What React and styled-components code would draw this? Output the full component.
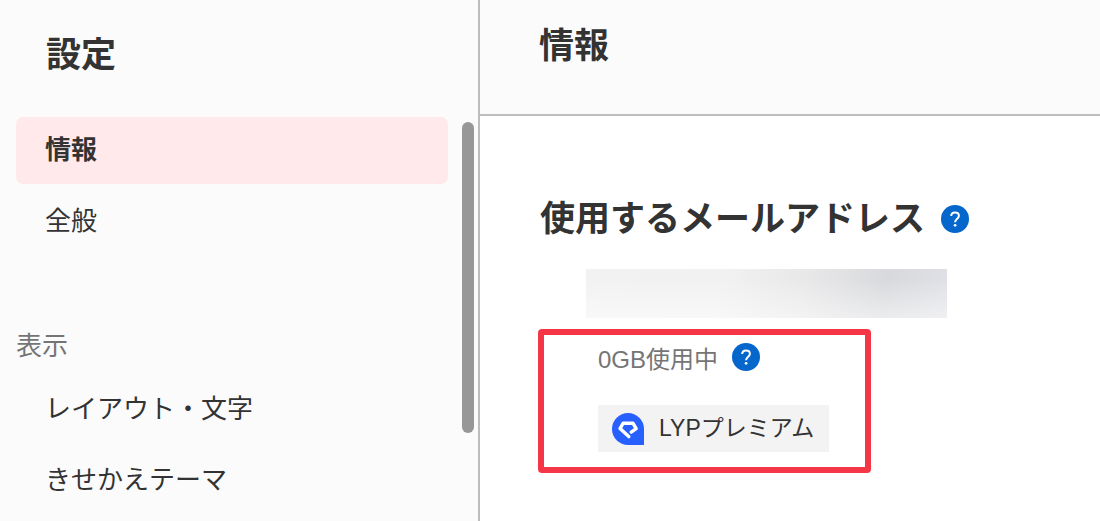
import styled, {createGlobalStyle} from "styled-components";

const GlobalStyle = createGlobalStyle`
  * {
    box-sizing: border-box;
  }

  body {
    margin: 0;
    background: #fff;
    color: #333;
    font-family: "Liberation Sans", "Noto Sans CJK JP", sans-serif;
  }
`

const Page = styled.div`
  display: flex;
  min-height: 100vh;
`

const Sidebar = styled.aside`
  flex: 0 0 480px;
  background: #fbfbfb;
  border-right: 2px solid #bdbdbd;
`

const SidebarTitle = styled.h1`
  margin: 0;
  padding: 33px 46px 40px;
  font-size: 35px;
  line-height: 44px;
`

const ScrollArea = styled.div`
  display: flex;
  gap: 14px;
  padding: 0 4px 0 16px;
`

const Menu = styled.nav`
  flex: 1;
  min-width: 0;
`

const MenuList = styled.ul`
  display: flex;
  flex-direction: column;
  gap: 4px;
  margin: 0;
  padding: 0;
  list-style: none;
`

const MenuLink = styled.a`
  display: block;
  padding: 0 29px;
  border-radius: 7px;
  background: ${props => props.$active ? '#ffe9eb' : 'transparent'};
  color: #333;
  font-size: 26px;
  font-weight: ${props => props.$active ? 'bold' : 'normal'};
  line-height: 67px;
  text-decoration: none;
`

const GroupTitle = styled.h2`
  margin: 72px 0 11px;
  color: #757575;
  font-size: 26px;
  font-weight: normal;
  line-height: 38px;
`

const ScrollThumb = styled.div`
  flex: 0 0 12px;
  height: 311px;
  margin-top: 5px;
  border-radius: 6px;
  background: #979797;
`

const Main = styled.main`
  flex: 1;
  min-width: 0;
`

const MainHeader = styled.header`
  padding: 24px 59px 46px;
  background: #fbfbfb;
  border-bottom: 2px solid #bdbdbd;
`

const MainTitle = styled.h2`
  margin: 0;
  font-size: 35px;
  line-height: 44px;
`

const Section = styled.section`
  padding: 81px 58px 40px;
`

const SectionHead = styled.div`
  display: flex;
  align-items: center;
  gap: 16px;
  padding-left: 2px;
`

const SectionTitle = styled.h3`
  margin: 0;
  font-size: 35px;
  line-height: 44px;
  white-space: nowrap;
`

const HelpButton = styled.button`
  display: block;
  width: 28px;
  height: 28px;
  padding: 0;
  border: 0;
  border-radius: 50%;
  background: #0566cc;
  cursor: pointer;
`

const MaskedAddress = styled.div`
  max-width: 361px;
  height: 49px;
  margin: 28px 0 11px 48px;
  background:
    linear-gradient(to bottom, rgba(255, 255, 255, 0) 20%, rgba(255, 255, 255, 0.5)),
    linear-gradient(100deg, #f2f2f3 0%, #f1f1f2 38%, #e8e8e9 60%, #d8d9dc 82%, #e0e1e6 100%);
`

const Highlight = styled.div`
  width: fit-content;
  padding: 8px 36px 15px 54px;
  border: 6px solid #f53646;
  border-radius: 4px;
`

const Usage = styled.div`
  display: flex;
  align-items: flex-start;
  gap: 14px;
  margin-bottom: 28px;
  color: #757575;
  font-size: 24px;
  line-height: 34px;
`

const PlanBadge = styled.div`
  display: flex;
  align-items: center;
  gap: 15px;
  padding: 0 15px 0 14px;
  background: #f3f3f3;
  font-size: 23px;
  line-height: 47px;
`

const HelpIcon = () => (
  <svg width="28" height="28" viewBox="0 0 28 28" fill="none" aria-hidden="true" display="block">
    <path d="M10.2 11.1C10.2 8.7 11.8 7.4 14 7.4s3.9 1.3 3.9 3.4c0 1.5-.9 2.3-2 3.2-1.2 1-1.8 1.6-1.8 3.2" stroke="#fff" strokeWidth="2"/>
    <circle cx="14.1" cy="20.3" r="1.4" fill="#fff"/>
  </svg>
)

const PremiumLogo = () => (
  <svg width="32" height="32" viewBox="0 0 32 32" fill="none" aria-hidden="true">
    <path d="M16 0a16 16 0 0 1 16 16v16H16A16 16 0 0 1 16 0z" fill="#2860ff"/>
    <path d="M16.8 23.6L8 15.6 11.2 10.2h9.7l3.3 5.4-5 3.5" stroke="#fff" strokeWidth="3.4" strokeLinejoin="round" strokeLinecap="round"/>
  </svg>
)

const Help = ({label}) => (
  <HelpButton type="button" aria-label={label}>
    <HelpIcon/>
  </HelpButton>
)

const MenuItem = ({active, children}) => (
  <li>
    <MenuLink href="#" $active={active} aria-current={active ? "page" : undefined}>{children}</MenuLink>
  </li>
)

const App = () => {
  return (
    <>
      <GlobalStyle/>
      <Page lang="ja">
        <Sidebar>
          <SidebarTitle>設定</SidebarTitle>
          <ScrollArea>
            <Menu>
              <MenuList>
                <MenuItem active>情報</MenuItem>
                <MenuItem>全般</MenuItem>
              </MenuList>
              <GroupTitle>表示</GroupTitle>
              <MenuList>
                <MenuItem>レイアウト・文字</MenuItem>
                <MenuItem>きせかえテーマ</MenuItem>
              </MenuList>
            </Menu>
            <ScrollThumb/>
          </ScrollArea>
        </Sidebar>
        <Main>
          <MainHeader>
            <MainTitle>情報</MainTitle>
          </MainHeader>
          <Section>
            <SectionHead>
              <SectionTitle>使用するメールアドレス</SectionTitle>
              <Help label="使用するメールアドレスのヘルプ"/>
            </SectionHead>
            <MaskedAddress/>
            <Highlight>
              <Usage>
                <span>0GB使用中</span>
                <Help label="使用容量のヘルプ"/>
              </Usage>
              <PlanBadge>
                <PremiumLogo/>
                <span>LYPプレミアム</span>
              </PlanBadge>
            </Highlight>
          </Section>
        </Main>
      </Page>
    </>
  )
}

export default App
